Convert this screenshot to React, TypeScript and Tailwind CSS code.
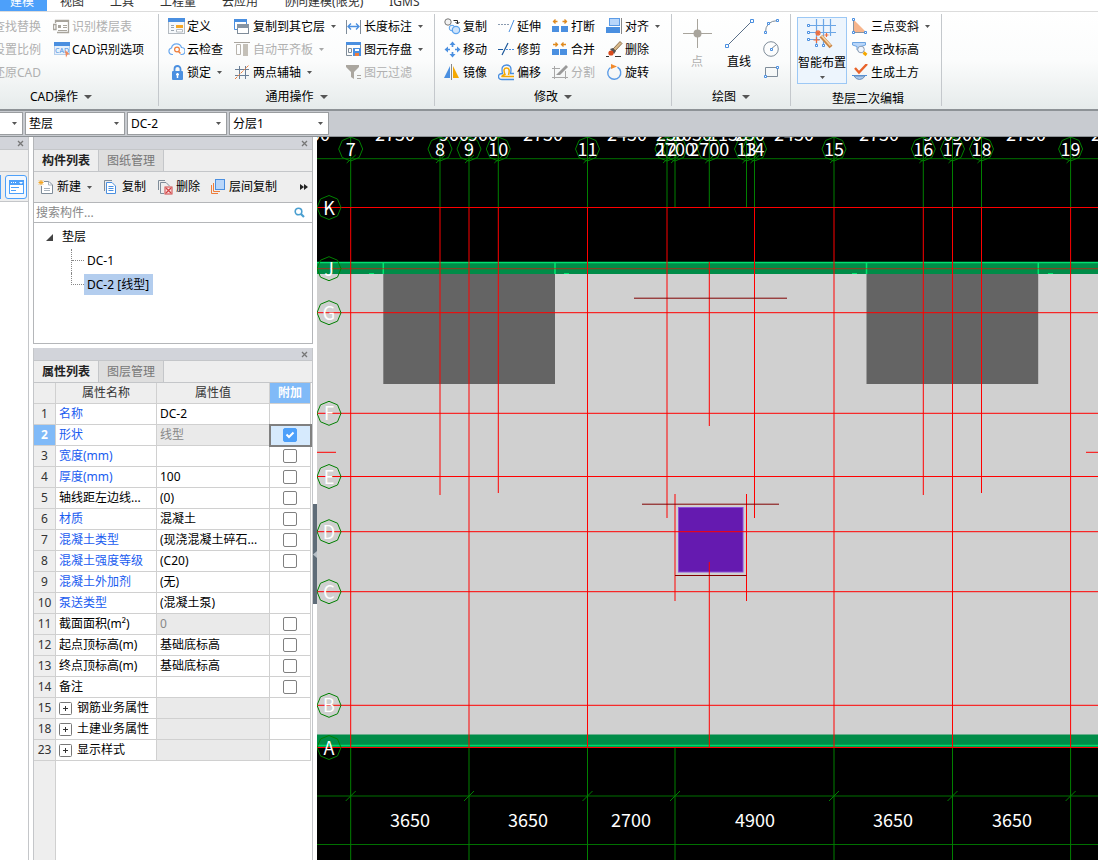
import { useState } from 'react';
import type { ReactNode } from 'react';
import clsx from 'clsx';

type IconProps = { children: ReactNode; size?: number };

function Icon({ children, size = 17 }: IconProps) {
  return (
    <svg width={size} height={size} viewBox={`0 0 ${size} ${size}`} fill="none" className="block shrink-0" aria-hidden="true">
      {children}
    </svg>
  );
}

function Caret({ big }: { big?: boolean }) {
  return big ? (
    <svg width="8" height="4" viewBox="0 0 8 4" className="shrink-0"><path d="M0 0H8L4 4Z" fill="#555" /></svg>
  ) : (
    <svg width="5" height="3" viewBox="0 0 5 3" className="shrink-0"><path d="M0 0H5L2.500 3Z" fill="#555" /></svg>
  );
}

const BLUE = '#4a8fe0';
const GRAY = '#7f8c99';

const icons = {
  floorTable: (
    <Icon>
      <path d="M2.500 5V2.500H15.500V14.500H4M3 6.500V11.500H0.500V6.500Z" stroke="#a8a49c" strokeWidth="1.300" />
      <path d="M2 3H16" stroke="#a8a49c" strokeWidth="2" />
      <path d="M5 7H8V10H5Z" fill="#a8a49c" />
      <path d="M10 7.500H14M10 9.500H14M5 12.500H14" stroke="#a8a49c" />
    </Icon>
  ),
  cad: (
    <Icon>
      <rect x="1.500" y="2.500" width="15" height="11" fill="#e6f1fc" stroke="#b4cfec" />
      <path d="M1 1H17V5H1Z" fill={BLUE} />
      <text x="9" y="12" textAnchor="middle" fontSize="7" fill="#4a8fe0">CAD</text>
      <path d="M12 9L16.500 13L14.500 13.500L13 16.500Z" fill="#f28a5c" />
    </Icon>
  ),
  define: (
    <Icon>
      <rect x="0.500" y="0.500" width="16" height="15" fill="#f5f8fb" stroke="#b4bac0" />
      <path d="M0 0H17V4H0Z" fill={BLUE} />
      <path d="M8 7H15V10H8Z" fill="#f5a623" />
      <path d="M3 7.500H6M3 9.500H6M3 12.500H6" stroke="#9aa4ae" />
      <path d="M8.500 11.500H14.500V14H8.500Z" fill="#fff" stroke="#b4bac0" />
    </Icon>
  ),
  cloud: (
    <Icon>
      <path d="M5 13.500H4A3.300 3.300 0 0 1 3.500 7A5.200 5.200 0 0 1 13.500 6.500A3.500 3.500 0 0 1 13.500 13.500H12.500" stroke="#6aa8ee" strokeWidth="1.200" />
      <circle cx="9" cy="8.500" r="2.400" stroke="#ee7d3b" strokeWidth="1.200" />
      <path d="M10.500 10.500L12.500 12.500" stroke="#ee7d3b" strokeWidth="1.500" />
    </Icon>
  ),
  lock: (
    <Icon>
      <path d="M6.500 8V5A3 3 0 0 1 12.500 5V8" stroke={BLUE} strokeWidth="1.800" />
      <rect x="4" y="7" width="11" height="9" rx="1" fill={BLUE} />
      <path d="M9.500 9V14M8 10.500H11" stroke="#fff" strokeWidth="1.500" />
    </Icon>
  ),
  copyLayer: (
    <Icon>
      <path d="M0.500 4V11.500H3M12.500 4V6" stroke={BLUE} />
      <path d="M0 1H13V4H0Z" fill={BLUE} />
      <rect x="3.500" y="7.500" width="11" height="8" fill="#fff" stroke={GRAY} />
      <path d="M3 6H15V10H3Z" fill="#8794a2" />
    </Icon>
  ),
  slab: (
    <Icon>
      <path d="M0 1.500H16" stroke="#aaa69f" />
      <path d="M2.500 3.500H6.500V13.500H2.500Z" stroke="#b8b4ad" />
      <path d="M9 3H14V15H9Z" fill="#c4c0b8" />
    </Icon>
  ),
  auxAxis: (
    <Icon>
      <path d="M5.500 2V15M11.500 2V15M1 5.500H15M1 11.500H15" stroke="#6b7f96" />
      <path d="M1 15L15 1" stroke="#ee7d3b" strokeDasharray="3 1" />
    </Icon>
  ),
  length: (
    <Icon>
      <path d="M1.500 2V16M15.500 2V16" stroke={GRAY} />
      <path d="M3 8.500H14M6 5.500L3 8.500L6 11.500M11 5.500L14 8.500L11 11.500" stroke={BLUE} strokeWidth="1.300" />
    </Icon>
  ),
  save: (
    <Icon>
      <path d="M1.500 2V14.500H7M15.500 2V7" stroke={GRAY} />
      <path d="M1 1H16V4H1Z" fill={BLUE} />
      <path d="M3.500 7.500H6.500V11.500H3.500Z" stroke={GRAY} />
      <path d="M8 7H16V15H8Z" fill={BLUE} />
      <path d="M10 8H14V10H10Z" fill="#fff" />
      <path d="M10 12H14V15H10Z" fill="#ee7d3b" />
    </Icon>
  ),
  filter: (
    <Icon>
      <path d="M1 1H14V3L9 8V15L6 13V8L1 3Z" fill="#aaa69f" />
      <path d="M12 11.500H16M12 14.500H16" stroke="#aaa69f" />
    </Icon>
  ),
  copy: (
    <Icon>
      <circle cx="4" cy="4" r="3.200" fill="#f2f2f2" stroke="#777" />
      <circle cx="8" cy="10" r="2.800" fill="#e6f2ff" stroke="#5ba3ee" />
      <circle cx="12" cy="12" r="3.700" fill="#cfe4fb" stroke="#5ba3ee" strokeWidth="1.300" />
      <path d="M9.500 2.500H13.500V5.500M11.500 4L13.500 6L15.500 4" stroke="#222" />
    </Icon>
  ),
  move: (
    <Icon>
      <path d="M8.500 2V6M8.500 11V15M2 8.500H6M11 8.500H15" stroke={BLUE} strokeWidth="1.700" />
      <path d="M5.500 4L8.500 0.500L11.500 4ZM5.500 13L8.500 16.500L11.500 13ZM4 5.500L0.500 8.500L4 11.500ZM13 5.500L16.500 8.500L13 11.500Z" fill={BLUE} />
    </Icon>
  ),
  mirror: (
    <Icon>
      <path d="M6 2V14H0Z" fill={BLUE} />
      <path d="M7.500 0V16" stroke="#888" />
      <path d="M9 2V14H15Z" fill="#f5a800" />
    </Icon>
  ),
  extend: (
    <Icon>
      <path d="M0 6.500H11" stroke="#8a9bb0" strokeDasharray="2 1" />
      <path d="M16 2L11 14" stroke={BLUE} />
    </Icon>
  ),
  trim: (
    <Icon>
      <path d="M0 8.500H5M10 2L4 14" stroke="#1e5a9c" strokeWidth="1.200" />
      <path d="M8 8.500H16" stroke={BLUE} strokeDasharray="2 1" />
    </Icon>
  ),
  offset: (
    <Icon>
      <path d="M16 9.500H12.500Q14.500 1 8.500 1T4.500 9.500Q0.500 9.500 0.500 12.500T4 15.500H16" stroke={BLUE} strokeWidth="1.300" />
      <path d="M16 12.500H4Q3.500 11.500 7 10.500Q4.500 4 8.500 4T10.500 11" stroke="#f5a800" strokeWidth="1.500" />
    </Icon>
  ),
  breakUp: (
    <Icon>
      <path d="M5.500 3.500H1.500M3.500 1.500L1.500 3.500L3.500 5.500M10.500 3.500H15M12.500 1.500L14.500 3.500L12.500 5.500" stroke="#e08a1e" strokeWidth="1.300" />
      <path d="M0 8H7V14H0ZM9 8H16V14H9Z" fill={BLUE} />
    </Icon>
  ),
  merge: (
    <Icon>
      <path d="M1 3.500H5.500M3.500 1.500L5.500 3.500L3.500 5.500M14 3.500H9.500M11.500 1.500L9.500 3.500L11.500 5.500" stroke="#e08a1e" strokeWidth="1.300" />
      <path d="M0 8H7V14H0ZM8 8H15V14H8Z" fill={BLUE} />
    </Icon>
  ),
  split: (
    <Icon>
      <path d="M2.500 2V15M13.500 7V15M0 4.500H8M0 13.500H16" stroke="#a8a8a8" />
      <path d="M4 11L14 1L16 3L8 11Z" fill="#999" />
    </Icon>
  ),
  align: (
    <Icon>
      <rect x="3.500" y="0.500" width="10" height="7" fill="#b8d6fa" stroke="#5b9be6" />
      <path d="M0 9H14V15H0Z" fill={BLUE} />
      <path d="M15.500 0V16" stroke="#888" />
    </Icon>
  ),
  erase: (
    <Icon>
      <path d="M7 8L14 0.500L16 2.500L9 10Z" fill="#d9b98a" stroke="#7a5a35" strokeWidth="0.800" />
      <path d="M4 8L7 7L10 10L8 13Z" fill="#555" />
      <circle cx="5" cy="12" r="2.600" fill="#d84a1c" />
      <path d="M0 15.500H3M9 15.500H15" stroke="#333" />
    </Icon>
  ),
  rotate: (
    <Icon>
      <path d="M4.500 3.500A6.500 6.500 0 1 0 11.500 3.200" stroke="#5b9be6" strokeWidth="1.400" />
      <path d="M5 0L11 2.500L5 5Z" fill="#f28a2c" />
    </Icon>
  ),
  slope: (
    <Icon>
      <path d="M2 2L14 14H2Z" fill="#f7b58c" />
      <path d="M1.500 2V14.500H14" stroke="#8a93a0" />
      <path d="M0.500 0.500H2.500V2.500H0.500ZM0.500 13.500H2.500V15.500H0.500ZM12.500 13.500H14.500V15.500H12.500Z" fill="#fff" stroke={BLUE} />
    </Icon>
  ),
  elevation: (
    <Icon>
      <path d="M0.500 1.500H13.500V4L9 5.500V9H5V5.500L0.500 4Z" fill="#b8d6fa" stroke="#6ba3e0" />
      <circle cx="9" cy="8.500" r="3.300" fill="#f0f6ff" stroke="#8a9bb0" />
      <path d="M11.500 11.500L14.500 14" stroke="#f5a800" strokeWidth="3" />
    </Icon>
  ),
  earth: (
    <Icon>
      <path d="M3 4L7 8.500L15 0" stroke="#e8632a" strokeWidth="2.400" />
      <path d="M0 11.500H15" stroke={BLUE} />
      <path d="M2 12Q4 15.500 7.500 15.500T13 12Z" stroke="#6b8fb8" fill="#a8c8ee" />
    </Icon>
  ),
};

type ToolProps = { label: string; icon?: ReactNode; off?: boolean; menu?: boolean };

function Tool({ label, icon, off, menu }: ToolProps) {
  return (
    <button type="button" disabled={off} className={clsx('flex h-[23px] shrink-0 items-center gap-[2px] whitespace-nowrap', off && 'text-[#b0b0b0]')}>
      {icon}
      <span>{label}</span>
      {menu && <span className={clsx('ml-1', off && 'opacity-50')}><Caret /></span>}
    </button>
  );
}

function Group({ title, width, menu = true, labelClass, children }: { title: string; width: string; menu?: boolean; labelClass?: string; children: ReactNode }) {
  return (
    <section className={clsx('flex shrink-0 flex-col border-r border-[#c4c8cc]', width)}>
      <div className="flex h-[70px] items-start pt-px">{children}</div>
      <button type="button" className={clsx('flex h-[22px] items-center justify-center gap-[6px] pt-1', labelClass)}>
        {title}
        {menu && <Caret big />}
      </button>
    </section>
  );
}

function Ribbon() {
  return (
    <div className="flex overflow-hidden border-b-2 border-[#8d9296] bg-linear-to-b from-white via-[#fbfcfc] to-[#e6ebeb] pt-[2px] pb-[3px]">
      <Group title="CAD操作" width="w-[159px]" labelClass="pr-9">
        <div className="flex w-[41px] flex-col items-end overflow-hidden">
          <Tool label="查找替换" off />
          <Tool label="设置比例" off />
          <Tool label="还原CAD" off />
        </div>
        <div className="ml-3 flex flex-col">
          <Tool label="识别楼层表" icon={icons.floorTable} off />
          <Tool label="CAD识别选项" icon={icons.cad} />
        </div>
      </Group>
      <Group title="通用操作" width="w-[276px]">
        <div className="ml-[9px] flex w-[66px] flex-col">
          <Tool label="定义" icon={icons.define} />
          <Tool label="云检查" icon={icons.cloud} />
          <Tool label="锁定" icon={icons.lock} menu />
        </div>
        <div className="flex w-[111px] flex-col">
          <Tool label="复制到其它层" icon={icons.copyLayer} menu />
          <Tool label="自动平齐板" icon={icons.slab} off menu />
          <Tool label="两点辅轴" icon={icons.auxAxis} menu />
        </div>
        <div className="flex flex-col">
          <Tool label="长度标注" icon={icons.length} menu />
          <Tool label="图元存盘" icon={icons.save} menu />
          <Tool label="图元过滤" icon={icons.filter} off />
        </div>
      </Group>
      <Group title="修改" width="w-[237px]">
        <div className="ml-[9px] flex w-[54px] flex-col">
          <Tool label="复制" icon={icons.copy} />
          <Tool label="移动" icon={icons.move} />
          <Tool label="镜像" icon={icons.mirror} />
        </div>
        <div className="flex w-[54px] flex-col">
          <Tool label="延伸" icon={icons.extend} />
          <Tool label="修剪" icon={icons.trim} />
          <Tool label="偏移" icon={icons.offset} />
        </div>
        <div className="flex w-[54px] flex-col">
          <Tool label="打断" icon={icons.breakUp} />
          <Tool label="合并" icon={icons.merge} />
          <Tool label="分割" icon={icons.split} off />
        </div>
        <div className="flex flex-col">
          <Tool label="对齐" icon={icons.align} menu />
          <Tool label="删除" icon={icons.erase} />
          <Tool label="旋转" icon={icons.rotate} />
        </div>
      </Group>
      <Group title="绘图" width="w-[119px]">
        <button type="button" disabled className="ml-[9px] flex w-8 flex-col items-center pt-[3px] text-[#b0b0b0]">
          <Icon size={32}>
            <path d="M16.500 1V30M2 15.500H31" stroke="#a8a49c" />
            <circle cx="16.500" cy="15.500" r="4" fill="#a8a49c" />
          </Icon>
          <span className="leading-6">点</span>
        </button>
        <button type="button" className="ml-[10px] flex w-8 flex-col items-center pt-[3px]">
          <Icon size={32}>
            <path d="M4 28L29 3" stroke="#5a6f88" />
            <path d="M2.500 26.500H5.500V29.500H2.500ZM27.500 1.500H30.500V4.500H27.500Z" fill="#fff" stroke={BLUE} />
          </Icon>
          <span className="leading-6">直线</span>
        </button>
        <div className="ml-2 flex flex-col">
          <button type="button" aria-label="弧" className="flex h-[23px] items-center">
            <Icon>
              <path d="M2.500 15Q2 3 15 2.500" stroke={GRAY} />
              <path d="M1.500 13.500H3.500V15.500H1.500ZM4.500 4.500H6.500V6.500H4.500ZM13.500 1.500H15.500V3.500H13.500Z" fill="#fff" stroke={BLUE} />
            </Icon>
          </button>
          <button type="button" aria-label="圆" className="flex h-[23px] items-center">
            <Icon>
              <circle cx="8" cy="8" r="7.300" stroke={GRAY} />
              <path d="M8 8L13.500 3.500" stroke={GRAY} />
              <path d="M7.500 7.500H9.500V9.500H7.500Z" fill="#fff" stroke={BLUE} />
            </Icon>
          </button>
          <button type="button" aria-label="矩形" className="flex h-[23px] items-center">
            <Icon>
              <path d="M2.500 3.500H14.500V12.500H2.500Z" stroke={GRAY} />
              <path d="M1.500 11.500H3.500V13.500H1.500ZM13.500 2.500H15.500V4.500H13.500Z" fill="#fff" stroke={BLUE} />
            </Icon>
          </button>
        </div>
      </Group>
      <Group title="垫层二次编辑" width="w-[151px]" menu={false} labelClass="pt-2 pl-1">
        <button type="button" className="mt-[2px] ml-[6px] flex h-[67px] w-[50px] flex-col items-center border border-[#9cc8f5] bg-[#edf5fd] whitespace-nowrap">
          <Icon size={32}>
            <path d="M10.500 1V27M17.500 1V27M24.500 1V18M2 7.500H30M2 14.500H30M2 21.500H14" stroke="#6ba6e6" strokeWidth="1.200" />
            <path d="M1.500 6.500H3.500V8.500H1.500ZM1.500 13.500H3.500V15.500H1.500ZM1.500 20.500H3.500V22.500H1.500ZM9.500 26.500H11.500V28.500H9.500ZM16.500 26.500H18.500V28.500H16.500Z" fill="#fff" stroke={BLUE} />
            <path d="M15 18L25 29" stroke="#c98544" strokeWidth="4" />
            <path d="M15.500 17.500L24.500 27.500" stroke="#f7d3a6" strokeWidth="1.800" />
            <path d="M12 12V18M9 15H15M10 13L14 17M14 13L10 17M10.500 19V25M7.500 22H13.500M20.500 15V19M18.500 17H22.500" stroke="#ee6c3b" strokeWidth="1.200" />
          </Icon>
          <span className="leading-[26px]">智能布置</span>
          <Caret />
        </button>
        <div className="ml-[5px] flex flex-col">
          <Tool label="三点变斜" icon={icons.slope} menu />
          <Tool label="查改标高" icon={icons.elevation} />
          <Tool label="生成土方" icon={icons.earth} />
        </div>
      </Group>
    </div>
  );
}

function Picker({ label, value }: { label: string; value: string }) {
  return (
    <label className="relative block h-[23px] w-[100px] shrink-0">
      <select aria-label={label} defaultValue={value} className="h-full w-full appearance-none rounded-none border border-[#9a9da0] bg-white pl-[3px] leading-5 outline-none">
        <option>{value}</option>
      </select>
      <span className="pointer-events-none absolute top-[10px] right-[6px] flex"><Caret /></span>
    </label>
  );
}

function PanelHeader() {
  return (
    <div className="flex h-3 shrink-0 items-center justify-end bg-[#d2d4da] pr-1">
      <button type="button" aria-label="关闭">
        <svg width="7" height="7" viewBox="0 0 7 7" className="block"><path d="M1 1L6 6M6 1L1 6" stroke="#777" strokeWidth="1.300" /></svg>
      </button>
    </div>
  );
}

function PanelTabs({ tabs }: { tabs: string[] }) {
  return (
    <div className="flex h-[23px] shrink-0 border-y border-[#c4c6c9] bg-[#eeeeee]">
      <button type="button" className="w-16 font-semibold text-[#222]">{tabs[0]}</button>
      <button type="button" className="w-[66px] border-x border-[#c4c6c9] bg-[#dedede] text-[#777]">{tabs[1]}</button>
    </div>
  );
}

function ComponentPanel() {
  return (
    <section className="flex flex-col border-x border-b border-[#b4b6b9]">
      <PanelHeader />
      <PanelTabs tabs={['构件列表', '图纸管理']} />
      <div className="flex h-[30px] items-center bg-[#eeeeee] whitespace-nowrap">
        <button type="button" className="flex items-center gap-[2px] pl-1">
          <Icon>
            <path d="M6 2.500H11L14.500 6V14.500H3.500V7" fill="#fff" stroke={GRAY} />
            <path d="M10.500 2.500V6H14M6 9.500H12M6 11.500H12" stroke="#a8b2bc" />
            <path d="M3 1V6M0.500 3.500H5.500M1 1.500L5 5.500M5 1.500L1 5.500" stroke="#f5a623" />
          </Icon>
          <span>新建</span>
          <span className="ml-1"><Caret /></span>
        </button>
        <button type="button" className="ml-[11px] flex items-center gap-[2px]">
          <Icon>
            <path d="M1.500 12V1.500H9" stroke={GRAY} />
            <path d="M3.500 3.500H9L12.500 7V14.500H3.500Z" fill="#fff" stroke={BLUE} />
            <path d="M5.500 7.500H10.500M5.500 9.500H10.500M5.500 11.500H10.500" stroke={BLUE} />
          </Icon>
          <span>复制</span>
        </button>
        <button type="button" className="ml-[11px] flex items-center gap-[2px]">
          <Icon>
            <path d="M1.500 11V1.500H8M7 14.500H3.500V3.500H9L12.500 7" stroke={GRAY} />
            <rect x="8" y="8" width="7" height="7" fill="#fbe3e3" stroke="#d04545" />
            <path d="M9 9L14 14M14 9L9 14" stroke="#d04545" strokeWidth="1.300" />
          </Icon>
          <span>删除</span>
        </button>
        <button type="button" className="ml-[10px] flex items-center gap-[2px]">
          <Icon>
            <path d="M1.500 6V14.500H8" stroke="#ee7d3b" />
            <path d="M3.500 4V12.500H10" stroke="#ee7d3b" />
            <rect x="5.500" y="0.500" width="9" height="10" fill="#b8d6fa" stroke={BLUE} />
          </Icon>
          <span>层间复制</span>
        </button>
        <button type="button" aria-label="更多" className="mr-1 ml-auto">
          <svg width="8" height="6" viewBox="0 0 8 6" className="block"><path d="M0 0L4 3L0 6ZM4 0L8 3L4 6Z" fill="#222" /></svg>
        </button>
      </div>
      <label className="flex h-[21px] items-center border-y border-[#b4b6b9] pr-[7px]">
        <input type="text" aria-label="搜索构件" placeholder="搜索构件..." className="min-w-0 flex-1 pl-[2px] outline-none placeholder:text-[#888]" />
        <svg width="11" height="11" viewBox="0 0 11 11" fill="none" stroke="#4a9fd0" strokeWidth="1.600">
          <circle cx="4.500" cy="4.500" r="3.300" />
          <path d="M7 7L10 10" strokeWidth="2.200" />
        </svg>
      </label>
      <ul className="h-[120px] pt-[2px] leading-6">
        <li>
          <div className="flex h-6 items-center gap-[9px] pl-3">
            <svg width="7" height="7" viewBox="0 0 7 7"><path d="M7 0V7H0Z" fill="#444" /></svg>
            <span>垫层</span>
          </div>
          <ul className="ml-[37px]">
            <li className="flex h-6 items-stretch">
              <span className="w-[13px] border-l border-dotted border-[#888]"><span className="block h-3 border-b border-dotted border-[#888]" /></span>
              <span className="pl-[3px]">DC-1</span>
            </li>
            <li className="flex h-6 items-start">
              <span className="block h-3 w-[13px] border-b border-l border-dotted border-[#888]" />
              <span className="mt-px bg-[#b3cdee] pr-1 pl-[3px] leading-[21px]">DC-2 [线型]</span>
            </li>
          </ul>
        </li>
      </ul>
    </section>
  );
}

type Property = { no: number; name: string; value?: string; link?: boolean; box?: boolean; gray?: boolean; group?: boolean };

const properties: Property[] = [
  { no: 1, name: '名称', value: 'DC-2', link: true },
  { no: 2, name: '形状', value: '线型', link: true, box: true, gray: true },
  { no: 3, name: '宽度(mm)', link: true, box: true },
  { no: 4, name: '厚度(mm)', value: '100', link: true, box: true },
  { no: 5, name: '轴线距左边线...', value: '(0)', box: true },
  { no: 6, name: '材质', value: '混凝土', link: true, box: true },
  { no: 7, name: '混凝土类型', value: '(现浇混凝土碎石...', link: true, box: true },
  { no: 8, name: '混凝土强度等级', value: '(C20)', link: true, box: true },
  { no: 9, name: '混凝土外加剂', value: '(无)', link: true },
  { no: 10, name: '泵送类型', value: '(混凝土泵)', link: true },
  { no: 11, name: '截面面积(m²)', value: '0', box: true, gray: true },
  { no: 12, name: '起点顶标高(m)', value: '基础底标高', box: true },
  { no: 13, name: '终点顶标高(m)', value: '基础底标高', box: true },
  { no: 14, name: '备注', box: true },
  { no: 15, name: '钢筋业务属性', group: true, gray: true },
  { no: 18, name: '土建业务属性', group: true, gray: true },
  { no: 23, name: '显示样式', group: true, gray: true },
];

function PropertyPanel() {
  const [checked, setChecked] = useState<number[]>([2]);
  const toggle = (no: number) => setChecked((list) => (list.includes(no) ? list.filter((n) => n !== no) : [...list, no]));

  return (
    <section className="mt-1 flex flex-1 flex-col border-x border-[#c4c6c9]">
      <PanelHeader />
      <PanelTabs tabs={['属性列表', '图层管理']} />
      <table className="w-[277px] table-fixed border-separate border-spacing-0">
        <thead>
          <tr className="h-[21px] bg-[#eeeeee] text-[#333] [&>th]:border-r [&>th]:border-b [&>th]:border-[#d0d0d0] [&>th]:p-0 [&>th]:font-normal">
            <th className="w-[22px]" />
            <th className="w-[101px]">属性名称</th>
            <th className="w-[113px]">属性值</th>
            <th className="bg-[#80baf8] text-white"><span className="font-semibold">附加</span></th>
          </tr>
        </thead>
        <tbody>
          {properties.map((p) => {
            const current = p.no === 2;
            const on = checked.includes(p.no);
            return (
              <tr key={p.no} className="h-[21px] leading-5 whitespace-nowrap [&>td]:border-r [&>td]:border-b [&>td]:border-[#d0d0d0] [&>td]:p-0">
                <td className={clsx('text-center', current ? 'bg-[#80baf8] font-bold text-white' : 'bg-[#eeeeee] text-[#333]')}>{p.no}</td>
                <td className={clsx('overflow-hidden', p.link && 'text-[#1a5cf0]')}>
                  <span className="flex items-center gap-[5px] pl-[3px]">
                    {p.group && (
                      <button type="button" aria-label={`展开${p.name}`}>
                        <svg width="13" height="13" viewBox="0 0 13 13" fill="none" className="block">
                          <rect x="0.500" y="0.500" width="12" height="12" rx="1" stroke="#777" fill="#fff" />
                          <path d="M4 6.500H9M6.500 4V9" stroke="#333" />
                        </svg>
                      </button>
                    )}
                    {p.name}
                  </span>
                </td>
                <td className={clsx(p.gray && 'bg-[#eaeaea] text-[#888]')}><span className="pl-[3px]">{p.value}</span></td>
                <td className={clsx(current && 'bg-[#d6eafd] outline-2 -outline-offset-1 outline-[#808080]')}>
                  {p.box && (
                    <label className="relative mx-auto block size-[14px]">
                      <input
                        type="checkbox"
                        aria-label={p.name}
                        checked={on}
                        onChange={() => toggle(p.no)}
                        className="block size-[14px] appearance-none rounded-[2px] border border-[#808080] bg-white checked:border-[#4da0fa] checked:bg-[#4da0fa]"
                      />
                      {on && (
                        <svg viewBox="0 0 14 14" fill="none" className="pointer-events-none absolute inset-0"><path d="M3.500 6.500L6 9L10.500 4.500" stroke="#fff" strokeWidth="2" /></svg>
                      )}
                    </label>
                  )}
                </td>
              </tr>
            );
          })}
        </tbody>
      </table>
      <div className="w-[22px] flex-1 border-r border-[#d0d0d0] bg-[#eeeeee]" />
    </section>
  );
}

// vertical axes: x, label, and the spans of the red part
const axes = [
  { x: 350.7, label: '7', spans: [[207, 748]] },
  { x: 440, label: '8', spans: [[207, 495]] },
  { x: 469, label: '9', spans: [[207, 748]] },
  { x: 498.3, label: '10', spans: [[207, 493]] },
  { x: 587.5, label: '11', spans: [[207, 748]] },
  { x: 667, label: '12', spans: [[207, 518]] },
  { x: 675, label: '2700', spans: [[494, 601]] },
  { x: 709.3, label: '2700', spans: [[262, 426], [562, 748]] },
  { x: 746.5, label: '13', spans: [[494, 601]] },
  { x: 754.5, label: '14', spans: [[207, 518]] },
  { x: 834, label: '15', spans: [[207, 748]] },
  { x: 923.3, label: '16', spans: [[207, 495]] },
  { x: 952.5, label: '17', spans: [[207, 748]] },
  { x: 981.5, label: '18', spans: [[207, 493]] },
  { x: 1070.6, label: '19', spans: [[207, 748]] },
];

const rows = [
  { y: 207.5, label: 'K' },
  { y: 268.7, label: 'J' },
  { y: 312.7, label: 'G' },
  { y: 413.3, label: 'F' },
  { y: 476.5, label: 'E' },
  { y: 531.7, label: 'D' },
  { y: 591.7, label: 'C' },
  { y: 705.3, label: 'B' },
  { y: 747.5, label: 'A' },
];

const topDims: [number, string][] = [
  [310, '3600'], [395, '2750'], [454, '900'], [483, '900'], [543, '2750'], [627, '2450'], [671, '250'], [692, '1050'],
  [728, '1150'], [750, '250'], [794, '2450'], [879, '2750'], [938, '900'], [967, '900'], [1026, '2750'], [1111, '2750'],
];

const bottomAxes = [350.7, 469, 587.5, 675, 834, 952.5, 1070.6];

const bottomDims: [number, string][] = [[410, '3650'], [528, '3650'], [631, '2700'], [755, '4900'], [893, '3650'], [1012, '3650']];

function Bubble({ x, y }: { x: number; y: number }) {
  const points = [0, 1, 2, 3, 4, 5, 6, 7].map((i) => {
    const a = (i * Math.PI) / 4;
    return `${x + 12 * Math.cos(a)},${y + 12 * Math.sin(a)}`;
  });
  return <polygon points={points.join(' ')} stroke="#008000" fill="none" />;
}

function Drawing() {
  return (
    <div className="relative min-w-0 flex-1 overflow-hidden bg-black">
      <svg viewBox="317 137 781 723" preserveAspectRatio="xMinYMin slice" className="absolute inset-0 h-full w-full font-['Noto_Sans_CJK_SC',sans-serif] text-[18px]" fill="none">
        {/* slab and walls */}
        <rect x="317" y="274" width="781" height="461" fill="#d0d0d0" />
        <rect x="317" y="262" width="781" height="12" fill="#008c48" />
        <path d="M317 262.500H1098" stroke="#00e070" strokeWidth="1.500" />
        <rect x="317" y="734.500" width="781" height="13" fill="#008c48" />
        <path d="M317 745.500H1098" stroke="#00d868" strokeWidth="1.500" />
        <rect x="383.300" y="274" width="171.700" height="110" fill="#646464" />
        <rect x="866.500" y="274" width="171.700" height="110" fill="#646464" />
        <path d="M383.300 263V274M555 263V274M866.500 263V274M1038.300 263V274" stroke="#00e870" strokeWidth="1.500" />
        <path d="M369 273.500H374M564 273.500H569M852 273.500H857M1048 273.500H1053" stroke="#00e870" />
        <rect x="678.500" y="507.500" width="64.500" height="64.500" fill="#651ab0" stroke="#8c4fd8" />

        {/* axis net */}
        {axes.map((a) => (
          <g key={a.x}>
            <path d={`M${a.x} 137V207`} stroke="#008000" />
            <path d={`M${a.x - 4} 163L${a.x + 5} 155`} stroke="#008000" />
            {a.spans.map(([from, to]) => (
              <path key={from} d={`M${a.x} ${from}V${to}`} stroke="#f00" />
            ))}
          </g>
        ))}
        {rows.map((r) => (
          <path key={r.label} d={`M317 ${r.y}H1098`} stroke="#f00" strokeOpacity={r.label === 'J' ? 0.6 : 1} />
        ))}
        <path d="M317 452.300H336M1086 452.300H1098" stroke="#f00" />
        <path d="M634 298.200H787M642 504.200H779M675 575.500H746.500" stroke="#800000" />

        {/* dimension lines */}
        <path d="M317 158.700H1098M317 796H1098M317 844.500H1098" stroke="#007000" />
        {bottomAxes.map((x) => (
          <g key={x} stroke="#008000">
            <path d={`M${x} 748V860`} />
            <path d={`M${x - 5} 801L${x + 5} 791`} />
          </g>
        ))}

        {axes.map((a) => <Bubble key={a.x} x={a.x} y={149} />)}
        {rows.map((r) => <Bubble key={r.label} x={329} y={r.y} />)}

        <g fill="#fff" textAnchor="middle">
          {topDims.map(([x, text]) => <text key={x} x={x} y={141}>{text}</text>)}
          {axes.map((a) => <text key={a.x} x={a.x} y={156}>{a.label}</text>)}
          {rows.map((r) => <text key={r.label} x={329} y={r.y + 7}>{r.label}</text>)}
          {bottomDims.map(([x, text]) => <text key={x} x={x} y={827}>{text}</text>)}
        </g>
      </svg>
    </div>
  );
}

const menus = ['视图', '工具', '工程量', '云应用', '协同建模(限免)', 'IGMS'];

export default function App() {
  return (
    <main className="flex min-h-screen flex-col overflow-hidden bg-white font-['Noto_Sans','Noto_Sans_CJK_SC',sans-serif] text-[12px] text-black">
      <nav className="flex h-3 items-end overflow-hidden border-b border-[#dcdcdc]">
        <button type="button" className="h-[18px] shrink-0 bg-[#4da0fa] pr-[13px] pl-[10px] leading-4 text-white">建模</button>
        {menus.map((m) => (
          <button key={m} type="button" className="h-[18px] shrink-0 px-[13px] leading-4 whitespace-nowrap text-[#333]">{m}</button>
        ))}
      </nav>

      <Ribbon />

      <div className="flex h-[26px] items-center gap-[2px] border-b border-[#8d9296] bg-[#c8cbd0]">
        <div className="flex h-[23px] w-[23px] items-center justify-end border-y border-r border-[#9a9da0] bg-white pr-[5px]"><Caret /></div>
        <Picker label="构件类型" value="垫层" />
        <Picker label="构件" value="DC-2" />
        <Picker label="分层" value="分层1" />
      </div>

      <div className="flex flex-1">
        <aside className="flex w-[29px] shrink-0 flex-col border-r border-[#c4c6c9]">
          <PanelHeader />
          <div className="h-[23px] border-y border-[#c4c6c9] bg-[#eeeeee]" />
          <div className="flex h-[30px] items-center justify-between border-b border-[#c4c6c9] bg-[#eeeeee] pr-px">
            <span className="h-6 w-px bg-[#4da0fa]" />
            <button type="button" aria-label="图元" className="flex h-6 w-[22px] items-center justify-center rounded-[3px] border border-[#4da0fa] bg-[#f2f8ff]">
              <svg width="15" height="14" viewBox="0 0 15 14" fill="none">
                <rect x="0.500" y="0.500" width="14" height="13" fill="#fff" stroke="#4da0fa" />
                <path d="M0 0H15V5H0Z" fill="#4da0fa" />
                <path d="M2 2.500H3M4 2.500H5M6 2.500H7" stroke="#fff" />
                <path d="M10 2H14L12 4Z" fill="#fff" />
                <path d="M2 7.500H10M2 10.500H7" stroke="#4da0fa" />
              </svg>
            </button>
          </div>
        </aside>

        <div className="ml-1 flex w-[280px] shrink-0 flex-col">
          <ComponentPanel />
          <PropertyPanel />
        </div>

        <button type="button" aria-label="收起面板" className="mt-[367px] flex h-[100px] w-1 shrink-0 items-center bg-[#5f6c78]">
          <svg width="4" height="7" viewBox="0 0 4 7"><path d="M4 0V7L0 3.500Z" fill="#b8c0c8" /></svg>
        </button>

        <Drawing />
      </div>
    </main>
  );
}
